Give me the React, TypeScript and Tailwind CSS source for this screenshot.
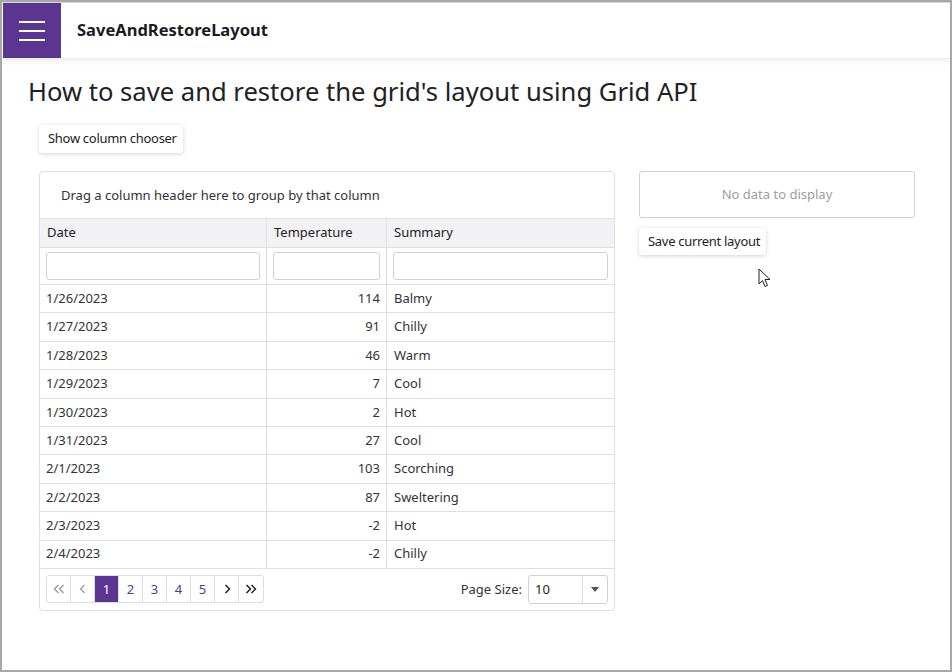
import React from "react";

const rows = [
  { date: "1/26/2023", temp: 114, summary: "Balmy" },
  { date: "1/27/2023", temp: 91, summary: "Chilly" },
  { date: "1/28/2023", temp: 46, summary: "Warm" },
  { date: "1/29/2023", temp: 7, summary: "Cool" },
  { date: "1/30/2023", temp: 2, summary: "Hot" },
  { date: "1/31/2023", temp: 27, summary: "Cool" },
  { date: "2/1/2023", temp: 103, summary: "Scorching" },
  { date: "2/2/2023", temp: 87, summary: "Sweltering" },
  { date: "2/3/2023", temp: -2, summary: "Hot" },
  { date: "2/4/2023", temp: -2, summary: "Chilly" },
];

function Cursor() {
  return (
    <svg className="absolute left-[758px] top-[268px]" width="14" height="20" viewBox="0 0 14 20">
      <path d="M1 1 L1 16 L4.5 12.5 L7 18.5 L9.5 17.5 L7 11.5 L12 11.5 Z" fill="#fff" stroke="#222" strokeWidth="1" strokeLinejoin="round" />
    </svg>
  );
}

function PagerBtn({ children, active, dim }: { children: React.ReactNode; active?: boolean; dim?: boolean }) {
  return (
    <div
      className={
        "w-6 h-full flex items-center justify-center border-r border-[#dcdce6] " +
        (active ? "bg-[#5c3590] text-white" : dim ? "text-[#9a9a9a]" : "text-[#5c3590]")
      }
    >
      {children}
    </div>
  );
}

export default function App() {
  return (
    <div className="relative w-[952px] h-[672px] bg-[#a8a8a8] p-[2px] font-['Noto_Sans',sans-serif] text-[13px] text-[#333]">
      <div className="w-full h-full bg-white border-t border-[#d8d8d8] overflow-hidden">
        {/* Header */}
        <div className="h-14 flex items-center shadow-[0_2px_6px_rgba(0,0,0,0.08)] border-b border-[#eee]">
          <div className="w-[58px] h-full bg-[#5c3590] flex flex-col items-center justify-center gap-[7px] ml-px">
            <div className="w-[26px] h-[2px] bg-white" />
            <div className="w-[26px] h-[2px] bg-white" />
            <div className="w-[26px] h-[2px] bg-white" />
          </div>
          <div className="ml-4 text-[16.5px] font-bold text-[#1b1b1b]">SaveAndRestoreLayout</div>
        </div>

        <div className="pl-[26px] pt-[15px]">
          <h1 className="text-[25.6px] leading-[36px] text-[#1e2125]">How to save and restore the grid's layout using Grid API</h1>

          <div className="pl-[11px] mt-[15px]">
            <button className="h-[28px] pl-[9px] pr-[6px] bg-white rounded-[3px] shadow-[0_1px_4px_rgba(0,0,0,0.18)] text-[#222] tracking-[-0.3px]">
              Show column chooser
            </button>
          </div>

          <div className="flex gap-6 pl-[11px] mt-[18px]">
            {/* Grid */}
            <div className="w-[576px] border border-[#dedee4] rounded-[4px]">
              <div className="h-[46px] flex items-center pl-[21px] pt-px text-[#333]">Drag a column header here to group by that column</div>
              <div className="grid grid-cols-[227px_120px_1fr] bg-[#f2f2f5] border-y border-[#dedee8] h-[30px] text-[#222]">
                <div className="flex items-center pl-[7px] border-r border-[#dedee8]">Date</div>
                <div className="flex items-center pl-[7px] border-r border-[#dedee8]">Temperature</div>
                <div className="flex items-center pl-[7px]">Summary</div>
              </div>
              <div className="grid grid-cols-[227px_120px_1fr] h-[37px] border-b border-[#dedee8]">
                <div className="flex items-center px-[6px] border-r border-[#dedee8]"><div className="w-full h-[28px] border border-[#cfd0dc] rounded-[3px]" /></div>
                <div className="flex items-center px-[6px] border-r border-[#dedee8]"><div className="w-full h-[28px] border border-[#cfd0dc] rounded-[3px]" /></div>
                <div className="flex items-center px-[6px]"><div className="w-full h-[28px] border border-[#cfd0dc] rounded-[3px]" /></div>
              </div>
              {rows.map((r, i) => (
                <div key={i} className="grid grid-cols-[227px_120px_1fr] h-[28.4px] border-b border-[#dedee8] text-[#333]">
                  <div className="flex items-center pl-[6px] border-r border-[#dedee8]">{r.date}</div>
                  <div className="flex items-center justify-end pr-[6px] border-r border-[#dedee8]">{r.temp}</div>
                  <div className="flex items-center pl-[7px]">{r.summary}</div>
                </div>
              ))}
              <div className="h-[41px] flex items-center justify-between px-[6px]">
                <div className="h-[28px] flex border border-[#dcdce6] rounded-[3px] overflow-hidden">
                  <PagerBtn dim>
                    <svg width="12" height="10" viewBox="0 0 12 10"><path d="M5.5 1 L1.5 5 L5.5 9 M10.5 1 L6.5 5 L10.5 9" fill="none" stroke="currentColor" strokeWidth="1.3" /></svg>
                  </PagerBtn>
                  <PagerBtn dim>
                    <svg width="8" height="10" viewBox="0 0 8 10"><path d="M5.5 1 L1.5 5 L5.5 9" fill="none" stroke="currentColor" strokeWidth="1.3" /></svg>
                  </PagerBtn>
                  <PagerBtn active>1</PagerBtn>
                  <PagerBtn>2</PagerBtn>
                  <PagerBtn>3</PagerBtn>
                  <PagerBtn>4</PagerBtn>
                  <PagerBtn>5</PagerBtn>
                  <div className="w-6 h-full flex items-center justify-center border-r border-[#dcdce6] text-[#222]">
                    <svg width="8" height="10" viewBox="0 0 8 10"><path d="M2.5 1 L6.5 5 L2.5 9" fill="none" stroke="currentColor" strokeWidth="1.5" /></svg>
                  </div>
                  <div className="w-6 h-full flex items-center justify-center text-[#222]">
                    <svg width="12" height="10" viewBox="0 0 12 10"><path d="M1.5 1 L5.5 5 L1.5 9 M6.5 1 L10.5 5 L6.5 9" fill="none" stroke="currentColor" strokeWidth="1.5" /></svg>
                  </div>
                </div>
                <div className="flex items-center gap-[6px]">
                  <span className="text-[#333]">Page Size:</span>
                  <div className="w-[80px] h-[29px] flex border border-[#cfd0dc] rounded-[3px]">
                    <div className="flex-1 flex items-center pl-[6px] text-[#222]">10</div>
                    <div className="w-[25px] flex items-center justify-center border-l border-[#dcdce6]">
                      <svg width="8" height="5" viewBox="0 0 8 5"><path d="M0 0 L8 0 L4 5 Z" fill="#555" /></svg>
                    </div>
                  </div>
                </div>
              </div>
            </div>

            {/* Right panel */}
            <div className="w-[276px]">
              <div className="h-[47px] border border-[#cfd0dc] rounded-[3px] flex items-center justify-center pt-px text-[#a0a0a0]">
                No data to display
              </div>
              <button className="mt-[10px] h-[27px] pl-[9px] pr-[6px] bg-white rounded-[3px] shadow-[0_1px_4px_rgba(0,0,0,0.18)] text-[#222] tracking-[-0.3px]">
                Save current layout
              </button>
            </div>
          </div>
        </div>
        <Cursor />
      </div>
    </div>
  );
}
